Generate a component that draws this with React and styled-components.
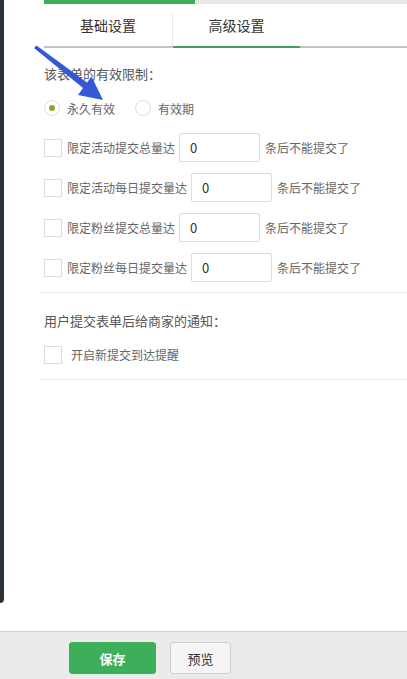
import React from 'react';
import styled, { createGlobalStyle } from 'styled-components';

const GlobalStyle = createGlobalStyle`
  html, body {
    margin: 0;
    padding: 0;
    background: #fff;
  }
  body {
    font-family: "Noto Sans CJK SC", "Noto Sans", sans-serif;
    color: #333;
  }
  * {
    box-sizing: border-box;
  }
`;

const Page = styled.div`
  position: relative;
  width: 407px;
  height: 679px;
  display: flex;
  flex-direction: column;
  overflow: hidden;
`;

const Main = styled.div`
  flex: 1;
  display: flex;
  align-items: flex-start;
`;

const Frame = styled.div`
  width: 4px;
  height: 603px;
  flex-shrink: 0;
  background: #2a3138;
  border-bottom-right-radius: 10px;
`;

const Content = styled.div`
  flex: 1;
  padding-left: 40px;
`;

const Progress = styled.div`
  display: flex;
  height: 4px;
  background: #e8e8e8;
  span {
    width: 151px;
    background: #3fae5a;
  }
`;

const Tabs = styled.div`
  display: flex;
  height: 44px;
  border-bottom: 2px solid #c4c4c4;
`;

const Tab = styled.div`
  position: relative;
  width: 128px;
  display: flex;
  align-items: center;
  justify-content: center;
  font-size: 14px;
  color: #333;
  border-left: ${(p) => (p.$divider ? '1px solid #eaeaea' : 'none')};
  margin-top: 10px;
  padding-bottom: 10px;
  &::after {
    content: '';
    display: ${(p) => (p.$active ? 'block' : 'none')};
    position: absolute;
    left: 0;
    right: 0;
    bottom: -2px;
    height: 2px;
    background: #42a05e;
  }
`;

const Heading = styled.div`
  font-size: 13px;
  color: #555;
  line-height: 18px;
  margin-top: ${(p) => p.$top}px;
`;

const RadioRow = styled.div`
  display: flex;
  align-items: center;
  margin-top: 17px;
  height: 16px;
`;

const Radio = styled.label`
  display: flex;
  align-items: center;
  gap: 7px;
  margin-right: 20px;
  font-size: 12px;
  color: #666;
  i {
    width: 16px;
    height: 16px;
    border: 1px solid #ddd;
    border-radius: 50%;
    display: flex;
    align-items: center;
    justify-content: center;
  }
  i::after {
    content: '';
    width: 6px;
    height: 6px;
    border-radius: 50%;
    background: ${(p) => (p.$checked ? '#8ca336' : 'transparent')};
  }
`;

const Limits = styled.div`
  margin-top: 17px;
  display: flex;
  flex-direction: column;
  gap: 11px;
`;

const CheckRow = styled.div`
  display: flex;
  align-items: center;
  height: 29px;
  font-size: 12px;
  color: #666;
  margin-top: ${(p) => p.$top || 0}px;
`;

const Box = styled.span`
  width: 18px;
  height: 18px;
  border: 1px solid #dcdcdc;
  margin-right: ${(p) => p.$gap || 5}px;
  flex-shrink: 0;
`;

const NumInput = styled.input`
  width: 81px;
  height: 29px;
  border: 1px solid #dcdcdc;
  border-radius: 2px;
  margin: 0 5px 0 4px;
  padding: 0 10px;
  font-family: inherit;
  font-size: 13px;
  color: #333;
  outline: none;
`;

const Divider = styled.div`
  height: 1px;
  background: #ebebeb;
  margin-left: -4px;
  margin-top: ${(p) => p.$top}px;
`;

const Footer = styled.div`
  height: 48px;
  flex-shrink: 0;
  border-top: 1px solid #d2d2d2;
  background: #ebebeb;
  display: flex;
  align-items: flex-start;
  padding: 10px 0 0 69px;
  gap: 14px;
`;

const Button = styled.button`
  height: 32px;
  width: ${(p) => p.$w}px;
  border-radius: 3px;
  font-family: inherit;
  font-size: 13px;
  cursor: pointer;
  background: ${(p) => (p.$primary ? '#3dae59' : '#f5f5f5')};
  color: ${(p) => (p.$primary ? '#fff' : '#333')};
  font-weight: ${(p) => (p.$primary ? 700 : 400)};
  border: 1px solid ${(p) => (p.$primary ? '#3dae59' : '#cfcfcf')};
`;

const Arrow = styled.svg`
  position: absolute;
  left: 0;
  top: 0;
  pointer-events: none;
`;

const limits = [
  { label: '限定活动提交总量达' },
  { label: '限定活动每日提交量达' },
  { label: '限定粉丝提交总量达' },
  { label: '限定粉丝每日提交量达' },
];

const App = () => {
  return (
    <Page>
      <GlobalStyle />
      <Main>
        <Frame />
        <Content>
          <Progress>
            <span />
          </Progress>
          <Tabs>
            <Tab>基础设置</Tab>
            <Tab $divider $active>高级设置</Tab>
          </Tabs>

          <Heading $top={17}>该表单的有效限制：</Heading>
          <RadioRow>
            <Radio $checked>
              <i />
              永久有效
            </Radio>
            <Radio>
              <i />
              有效期
            </Radio>
          </RadioRow>

          <Limits>
            {limits.map((item, i) => (
              <CheckRow key={i}>
                <Box />
                {item.label}
                <NumInput defaultValue="0" />
                条后不能提交了
              </CheckRow>
            ))}
          </Limits>
          <Divider $top={10} />

          <Heading $top={19}>用户提交表单后给商家的通知：</Heading>
          <CheckRow $top={10}>
            <Box $gap={9} />
            开启新提交到达提醒
          </CheckRow>
          <Divider $top={10} />
        </Content>
      </Main>
      <Footer>
        <Button $primary $w={87}>保存</Button>
        <Button $w={61}>预览</Button>
      </Footer>

      <Arrow width="120" height="110" viewBox="0 0 120 110">
        <polygon
          points="34,48 36.5,45.5 87,82.5 91.5,76.5 103,100 78,95 83,88"
          fill="#3558d6"
        />
      </Arrow>
    </Page>
  );
};

export default App;
